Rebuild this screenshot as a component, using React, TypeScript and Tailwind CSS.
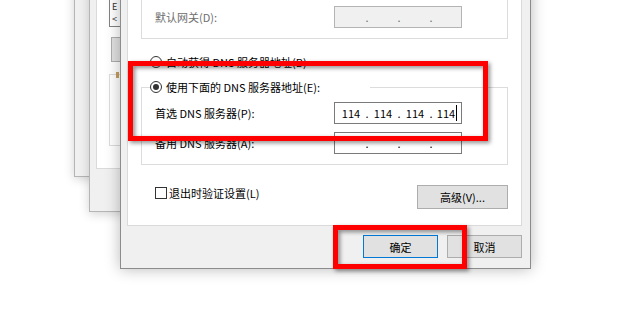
import { Fragment } from "react";

type IpFieldProps = {
  parts: string[];
  disabled?: boolean;
  cursor?: boolean;
};

function IpField({ parts, disabled, cursor }: IpFieldProps) {
  return (
    <div
      className={`flex h-[22px] w-[128px] items-center border pl-[4px] leading-[14px] ${
        disabled
          ? "border-[#b4b4b4] bg-[#f0f0f0] text-[#6d6d6d]"
          : "border-[#7a7a7a] bg-white text-black"
      }`}
    >
      {parts.map((part, i) => (
        <Fragment key={i}>
          {i > 0 && <span className="w-[8px] text-center">.</span>}
          <span className="flex w-[24px] items-center justify-center">
            {part}
            {cursor && i === parts.length - 1 && (
              <span className="ml-px h-[16px] w-px bg-black" />
            )}
          </span>
        </Fragment>
      ))}
    </div>
  );
}

function Radio({ checked }: { checked?: boolean }) {
  return (
    <span className="flex h-[12px] w-[12px] shrink-0 items-center justify-center rounded-full border border-[#333333] bg-white">
      {checked && <span className="h-[6px] w-[6px] rounded-full bg-[#333333]" />}
    </span>
  );
}

function WinButton({ label, focused }: { label: string; focused?: boolean }) {
  return (
    <div
      className={`flex h-[23px] w-[75px] items-center justify-center border bg-[#e1e1e1] ${
        focused ? "border-[#0078d7]" : "border-[#adadad]"
      }`}
    >
      {label}
    </div>
  );
}

export default function App() {
  return (
    <div className="relative h-[309px] w-[620px] overflow-hidden bg-white font-['Noto_Sans_CJK_SC','Microsoft_YaHei',sans-serif] text-[11px] leading-[16px] text-black">
      {/* back window A */}
      <div className="absolute left-[74px] top-[-20px] h-[197px] w-[120px] border border-[#b5b5b5] bg-[#f0f0f0] shadow-[0_2px_10px_rgba(0,0,0,0.18)]" />

      {/* back window B */}
      <div className="absolute left-[89px] top-[-50px] h-[262px] w-[100px] border border-[#b5b5b5] bg-[#f0f0f0] px-[6px] pb-[42px] pt-[6px] shadow-[0_2px_10px_rgba(0,0,0,0.18)]">
        <div className="flex h-full flex-col border border-[#dadada] bg-white pl-[12px] pt-[22px]">
          <div className="flex h-[47px] flex-col gap-[3px] border border-[#828282] pl-[2px] pt-[21px] text-[9px] leading-[9px] text-[#333333]">
            <span>E</span>
            <span>&lt;</span>
          </div>
          <div className="ml-[2px] mt-[10px] h-[25px] border border-[#adadad] bg-[#e1e1e1]" />
          <div className="relative mt-[12px] h-[72px] border border-[#dcdcdc]">
            <span className="absolute left-[6px] top-[-3px] h-[6px] w-[3px] bg-[#c8a060]" />
          </div>
        </div>
      </div>

      {/* main dialog */}
      <div className="absolute left-[120px] top-[-60px] flex w-[411px] flex-col border border-[#8c8c8c] bg-[#f0f0f0] pb-[10px] pl-[6px] pr-[8px] pt-[9px] shadow-[0_0_14px_rgba(0,0,0,0.28)]">
        <div className="flex flex-col border border-[#dadada] bg-white px-[13px] pb-[16px] pt-[19px]">
          <div className="border border-[#dcdcdc] pb-[10px] pl-[13px] pr-[45px] pt-[35px]">
            <div className="flex items-center justify-between">
              <span className="text-[#6d6d6d]">默认网关(D):</span>
              <IpField parts={["", "", "", ""]} disabled />
            </div>
          </div>

          <div className="ml-[9px] mt-[15px] flex h-[16px] items-center gap-[4px]">
            <Radio />
            <span>自动获得 DNS 服务器地址(B)</span>
          </div>

          <fieldset className="mt-[9px] border border-[#dcdcdc]">
            <legend className="ml-[8px] flex h-[16px] w-[220px] items-center gap-[4px]">
              <Radio checked />
              <span>使用下面的 DNS 服务器地址(E):</span>
            </legend>
            <div className="flex flex-col gap-[8px] pb-[10px] pl-[13px] pr-[45px] pt-[7px]">
              <div className="flex items-center justify-between">
                <span>首选 DNS 服务器(P):</span>
                <IpField parts={["114", "114", "114", "114"]} cursor />
              </div>
              <div className="flex items-center justify-between">
                <span>备用 DNS 服务器(A):</span>
                <IpField parts={["", "", "", ""]} />
              </div>
            </div>
          </fieldset>

          <div className="mt-[20px] flex items-start justify-between">
            <div className="ml-[14px] flex h-[16px] items-center gap-[2px]">
              <span className="h-[12px] w-[12px] border border-[#333333] bg-white" />
              <span>退出时验证设置(L)</span>
            </div>
            <div className="flex h-[24px] w-[91px] items-center justify-center border border-[#adadad] bg-[#e1e1e1]">
              高级(V)...
            </div>
          </div>
        </div>

        <div className="mt-[9px] flex justify-end gap-[9px]">
          <WinButton label="确定" focused />
          <WinButton label="取消" />
        </div>
      </div>

      {/* red annotation boxes */}
      <div className="absolute left-[128px] top-[61px] h-[80px] w-[360px] border-[5px] border-[#ff0000] drop-shadow-[2px_2px_2px_rgba(0,0,0,0.45)]" />
      <div className="absolute left-[333px] top-[225px] h-[44px] w-[134px] border-[5px] border-[#ff0000] drop-shadow-[2px_2px_2px_rgba(0,0,0,0.45)]" />
    </div>
  );
}
